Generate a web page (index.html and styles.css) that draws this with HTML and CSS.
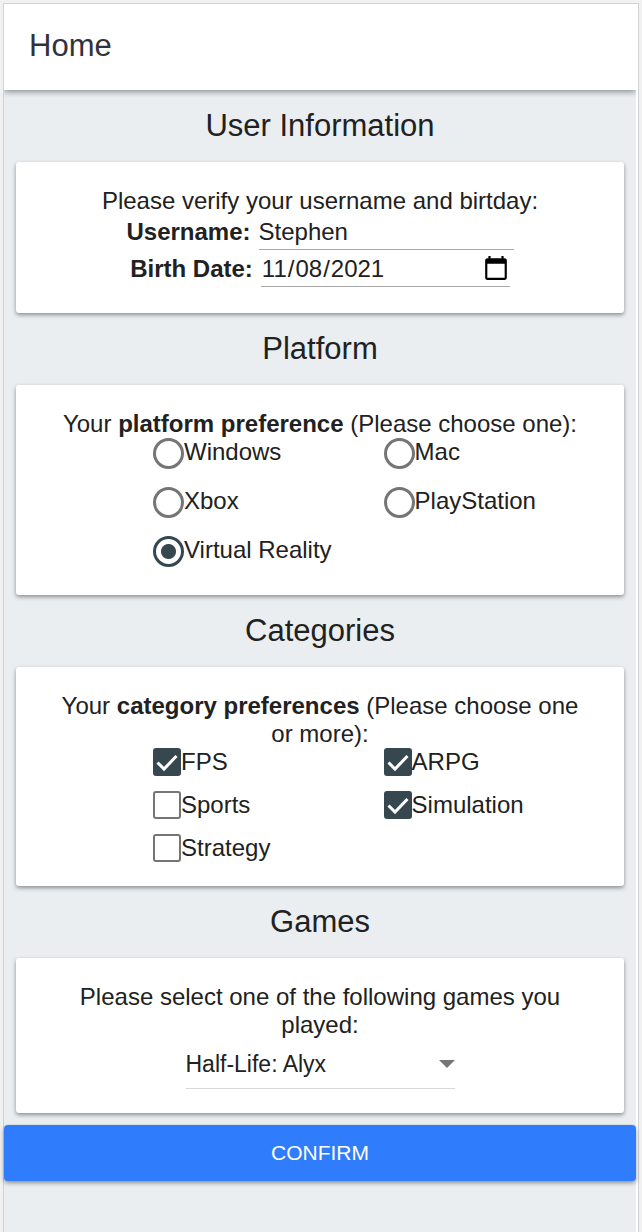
FILE: index.html
```html
<!DOCTYPE html>
<html lang="en-US">
<head>
  <meta charset="utf-8">
  <meta name="viewport" content="width=device-width, initial-scale=1">
  <title>Home</title>
  <link rel="stylesheet" href="styles.css">
</head>
<body>
  <div class="frame">
    <div class="app">
      <header class="app-bar"><h1 class="app-title">Home</h1></header>
      <form class="preferences">
        <h2 class="section-title">User Information</h2>
        <section class="card">
          <p class="prompt">Please verify your username and birtday:</p>
          <div class="field">
            <label class="field-label" for="username">Username:</label>
            <input class="field-input" id="username" type="text" value="Stephen">
          </div>
          <div class="field">
            <label class="field-label" for="birth-date">Birth Date:</label>
            <input class="field-input field-date" id="birth-date" type="date" value="2021-11-08">
          </div>
        </section>

        <h2 class="section-title">Platform</h2>
        <section class="card">
          <p class="prompt">Your <strong>platform preference</strong> (Please choose one):</p>
          <div class="options options-radio">
            <label class="option"><input class="radio" type="radio" name="platform">Windows</label>
            <label class="option"><input class="radio" type="radio" name="platform">Mac</label>
            <label class="option"><input class="radio" type="radio" name="platform">Xbox</label>
            <label class="option"><input class="radio" type="radio" name="platform">PlayStation</label>
            <label class="option"><input class="radio" type="radio" name="platform" checked>Virtual Reality</label>
          </div>
        </section>

        <h2 class="section-title">Categories</h2>
        <section class="card">
          <p class="prompt">Your <strong>category preferences</strong> (Please choose one or more):</p>
          <div class="options options-check">
            <label class="option"><input class="check" type="checkbox" checked>FPS</label>
            <label class="option"><input class="check" type="checkbox" checked>ARPG</label>
            <label class="option"><input class="check" type="checkbox">Sports</label>
            <label class="option"><input class="check" type="checkbox" checked>Simulation</label>
            <label class="option"><input class="check" type="checkbox">Strategy</label>
          </div>
        </section>

        <h2 class="section-title">Games</h2>
        <section class="card">
          <p class="prompt" id="game-prompt">Please select one of the following games you played:</p>
          <select class="game-select" aria-labelledby="game-prompt">
            <option>Half-Life: Alyx</option>
          </select>
        </section>

        <button class="confirm" type="button">CONFIRM</button>
      </form>
    </div>
  </div>
</body>
</html>
```

FILE: styles.css
```css
* {
  box-sizing: border-box;
}

body {
  margin: 0;
  background: #f1f1f1;
  color: #212121;
  font-family: "Liberation Sans", Arial, sans-serif;
  font-size: 24px;
  line-height: 28px;
}

.frame {
  display: flex;
  min-height: 100vh;
  padding: 3px 3px 0;
}

.app {
  flex: 1;
  padding-right: 2px;
  border: 1px solid #d0d3d6;
  border-bottom: 0;
  background: linear-gradient(#eaeef1, #eaeef1) content-box, #fff;
}

.app-bar {
  padding: 23px 25px 25px;
  background: #fff;
  box-shadow: 0 2px 6px rgba(0, 0, 0, 0.4);
  clip-path: inset(0 0 -8px);
}

.app-title {
  margin: 0;
  color: #32323d;
  font-size: 31px;
  font-weight: 400;
  line-height: 38px;
}

.section-title {
  margin: 0;
  font-size: 31px;
  font-weight: 400;
  line-height: 72px;
  text-align: center;
}

.card {
  margin: 0 12px;
  padding: 25px 36px 24px;
  border-radius: 3px;
  background: #fff;
  box-shadow: 0 2px 4px rgba(0, 0, 0, 0.4);
}

.prompt {
  margin: 0;
  text-align: center;
}

.field {
  display: flex;
  justify-content: center;
  gap: 8px;
  padding-bottom: 2px;
}

.field-label {
  font-weight: 700;
  line-height: 34px;
}

.field-input {
  width: 255px;
  height: 35px;
  padding: 0;
  border: 0;
  border-bottom: 1px solid #a8a8a8;
  background: transparent;
  color: inherit;
  font: inherit;
}

.field-date {
  width: 249px;
}

.field-date::-webkit-calendar-picker-indicator {
  width: 28px;
  height: 28px;
  padding: 0;
}

.options {
  display: grid;
  grid-template-columns: 53% 1fr;
  padding-left: 101px;
}

.options-radio {
  row-gap: 18px;
  padding-bottom: 4px;
}

.options-check {
  row-gap: 15px;
}

.option {
  display: flex;
  align-items: flex-start;
  white-space: nowrap;
}

.radio,
.check {
  flex: none;
  margin: 0;
  appearance: none;
  background: #fff;
}

.radio {
  width: 31px;
  height: 31px;
  border: 3px solid #757575;
  border-radius: 50%;
}

.radio:checked {
  border-color: #37474f;
  background: radial-gradient(circle, #37474f 7px, #fff 8px);
}

.check {
  width: 28px;
  height: 28px;
  border: 2px solid #757575;
  border-radius: 3px;
}

.check:checked {
  border-color: #37474f;
  background: #37474f url("data:image/svg+xml,%3Csvg xmlns='http://www.w3.org/2000/svg' viewBox='0 0 24 24'%3E%3Cpath d='M2.5 12.5 9 19 21.5 6' fill='none' stroke='white' stroke-width='3'/%3E%3C/svg%3E") center / 24px no-repeat;
}

.game-select {
  display: block;
  width: 269px;
  height: 50px;
  margin: 0 auto;
  padding: 0;
  appearance: none;
  border: 0;
  border-bottom: 1px solid #d8d8d8;
  border-radius: 0;
  background: url("data:image/svg+xml,%3Csvg xmlns='http://www.w3.org/2000/svg' viewBox='0 0 16 8'%3E%3Cpath d='M0 0H16L8 8Z' fill='%23757575'/%3E%3C/svg%3E") right center / 16px 8px no-repeat;
  color: inherit;
  font: inherit;
  font-size: 23px;
}

.confirm {
  display: block;
  width: 100%;
  height: 56px;
  margin-top: 12px;
  padding: 0;
  border: 0;
  border-radius: 4px;
  background: #2f7dfd;
  box-shadow: 0 2px 4px rgba(0, 0, 0, 0.4);
  color: #fff;
  font: inherit;
  font-size: 21px;
}
```
